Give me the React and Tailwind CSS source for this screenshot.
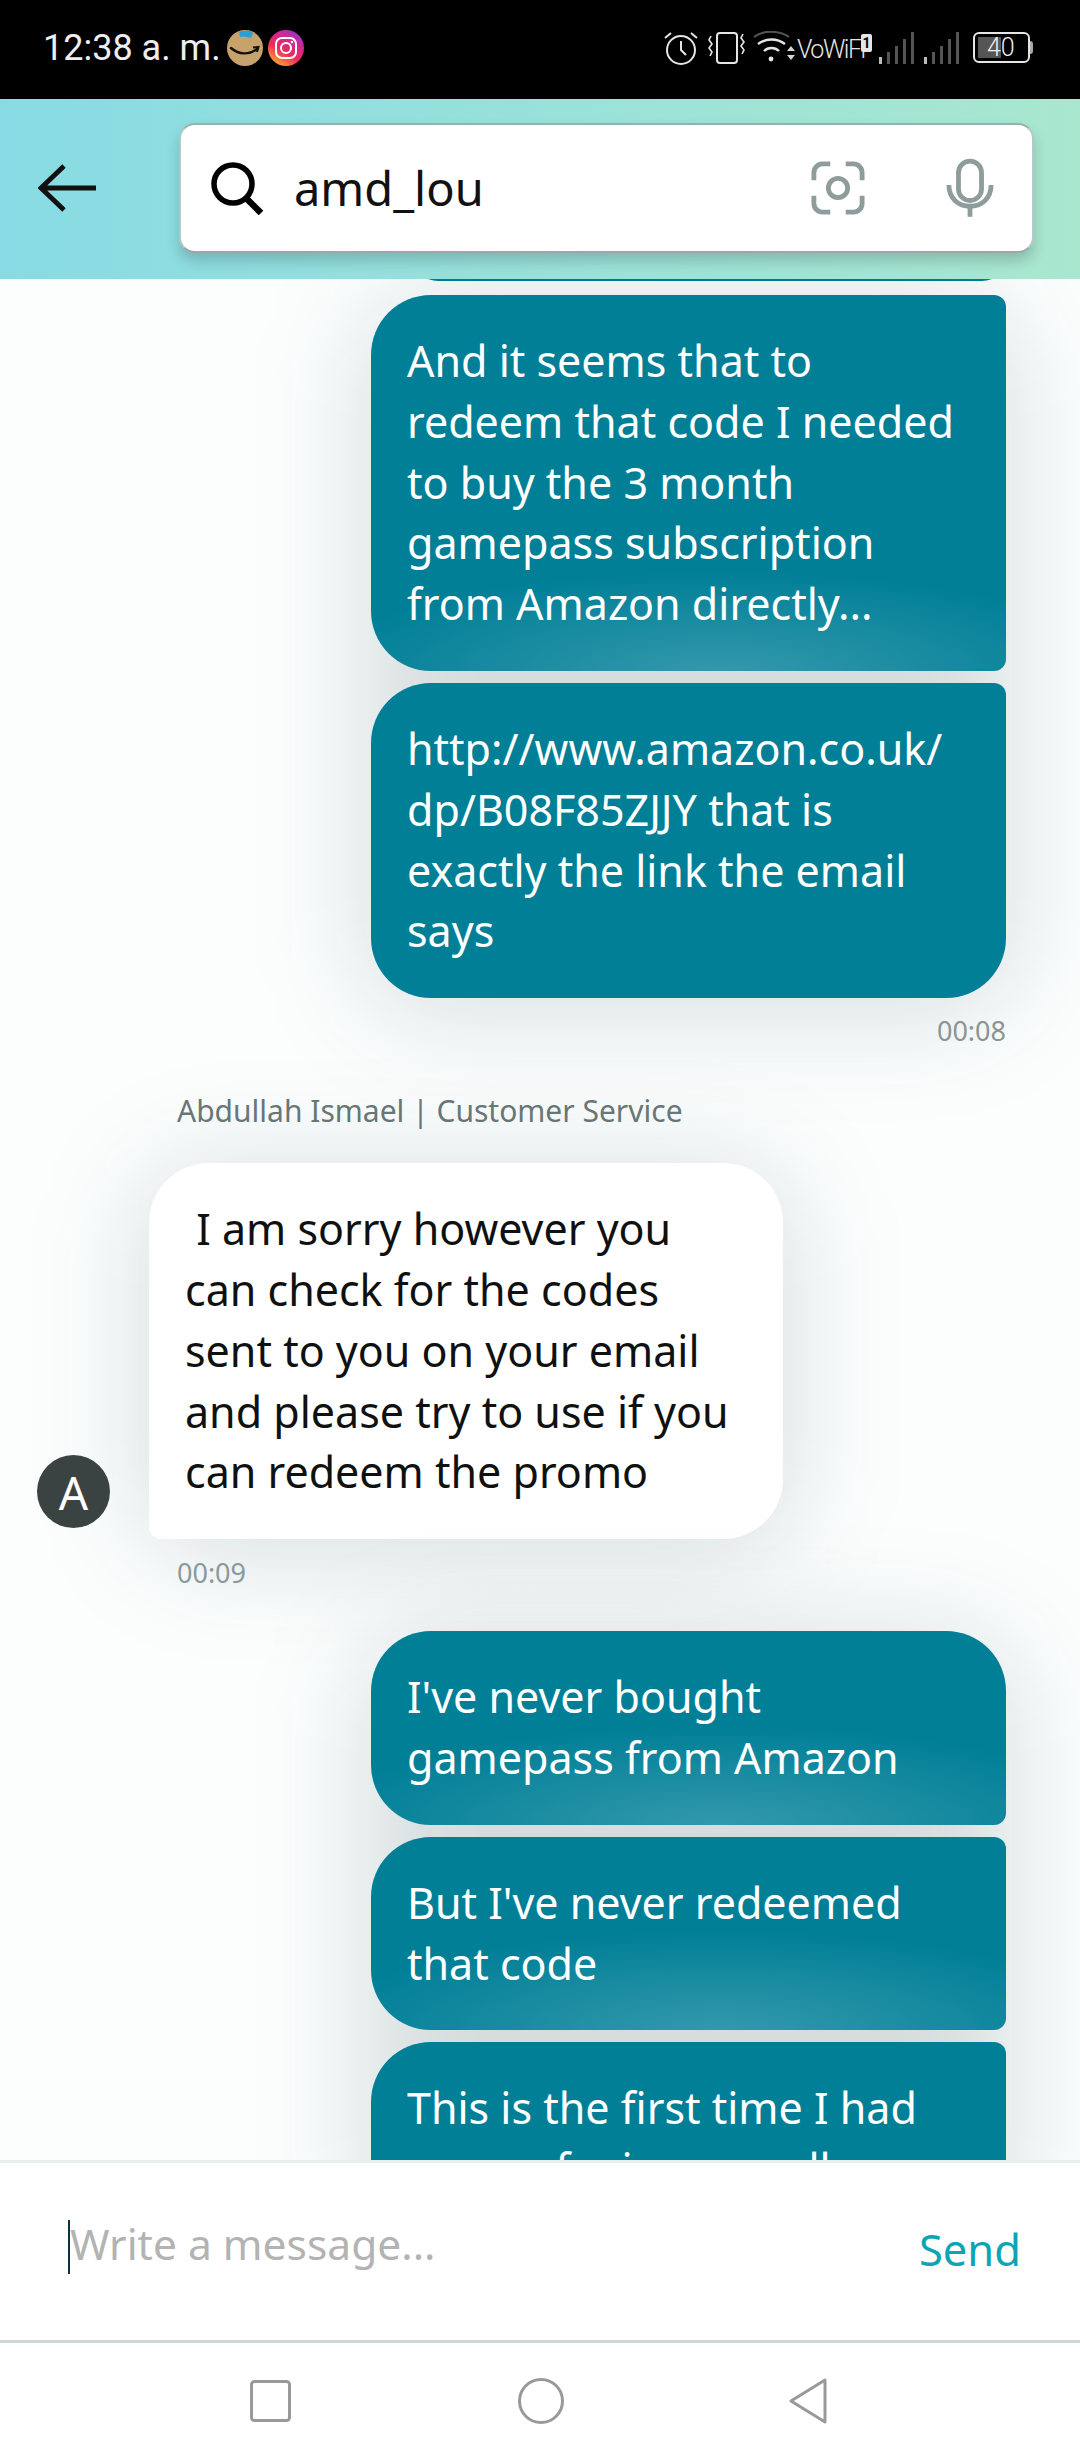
import React from "react";

const FONT = "font-['Noto_Sans',sans-serif]";

const AmazonIcon = () => (
  <svg width="36" height="36" viewBox="0 0 36 36">
    <circle cx="18" cy="18" r="18" fill="#c8a26c" />
    <path d="M12 1.5 L23 0.5 L26 3 L24 8 L17 6.5 L13 7 Z" fill="#2a9fd6" />
    <path d="M4 18 C12 25 22 25 30 19" fill="none" stroke="#111" strokeWidth="2.4" strokeLinecap="round" />
    <path d="M26 17.5 L31.5 17 L30 22" fill="none" stroke="#111" strokeWidth="2" />
  </svg>
);

const InstagramIcon = () => (
  <svg width="36" height="36" viewBox="0 0 36 36">
    <defs>
      <linearGradient id="ig" x1="0.2" y1="1" x2="0.8" y2="0">
        <stop offset="0" stopColor="#fdb32b" />
        <stop offset="0.4" stopColor="#ee2a5b" />
        <stop offset="0.8" stopColor="#c32aa3" />
        <stop offset="1" stopColor="#8a3ac8" />
      </linearGradient>
    </defs>
    <circle cx="18" cy="18" r="18" fill="url(#ig)" />
    <rect x="8" y="8" width="20" height="20" rx="6" fill="none" stroke="#fff" strokeWidth="2" />
    <circle cx="18" cy="18" r="5" fill="none" stroke="#fff" strokeWidth="2" />
    <circle cx="24" cy="12" r="1.3" fill="#fff" />
  </svg>
);

const Signal = ({ className }) => (
  <svg className={className} width="37" height="32" viewBox="0 0 37 32">
    <rect x="1" y="25" width="3" height="7" fill="#bbb" />
    <rect x="9" y="20" width="3" height="12" fill="#555" />
    <rect x="17" y="14" width="3" height="18" fill="#555" />
    <rect x="25" y="7" width="3" height="25" fill="#555" />
    <rect x="33" y="0" width="3" height="32" fill="#555" />
  </svg>
);

const StatusIcons = () => (
  <div className="flex items-center">
    <svg width="36" height="36" viewBox="0 0 36 36" fill="none" stroke="#e5e5e5" strokeWidth="2">
      <circle cx="18" cy="20" r="14" />
      <path d="M18 11v9l5 5M2 8l6-5M34 8l-6-5" />
    </svg>
    <svg className="ml-[9px]" width="38" height="32" viewBox="0 0 38 32" fill="none" stroke="#e5e5e5" strokeWidth="2">
      <rect x="9" y="1" width="20" height="30" rx="3" />
      <path d="M3 4l-2 4 3 4-3 4 3 4-2 4M35 2l-2 4 3 4-3 4 3 4-2 4" strokeWidth="1.6" />
    </svg>
    <svg className="ml-[7px]" width="44" height="34" viewBox="0 0 44 34" fill="none">
      <path d="M1 6C10 -1 26 -1 36 6" stroke="#555" strokeWidth="2" />
      <path d="M5 13C13 7 24 7 32 13M11 20C15 16 22 16 26 20" stroke="#e5e5e5" strokeWidth="2.4" />
      <circle cx="18" cy="28" r="2.4" fill="#e5e5e5" />
      <path d="M34 20l4-5 4 5zM34 24l4 5 4-5z" fill="#d4d4d4" />
    </svg>
    <span className="mt-[4px] w-[64px] whitespace-nowrap text-[25px] leading-none text-[#e5e5e5] font-['Roboto',sans-serif] font-light tracking-[-1.5px]">VoWiFi</span>
    <span className="-mt-[10px] flex h-[18px] w-[11px] items-center justify-center rounded-[2px] bg-[#e5e5e5] text-[14px] font-bold leading-none text-black font-['Roboto',sans-serif]">1</span>
    <Signal className="ml-[6px]" />
    <Signal className="ml-[8px]" />
    <div className="relative ml-[13px] flex h-[31px] w-[57px] items-center rounded-[6px] border-2 border-[#e5e5e5] pl-[3px]">
      <div className="h-[21px] w-[23px] bg-[#555]" />
      <span className="absolute left-[12px] top-[1px] text-[25px] leading-[25px] text-[#eee] font-['Roboto',sans-serif] font-light">40</span>
    </div>
    <div className="h-[13px] w-[3px] rounded-r-sm bg-[#aaa]" />
  </div>
);

// soft grey halo the app paints behind each message group
const Glow = () => <div className="absolute -inset-x-[6px] top-[6px] -bottom-[14px] rounded-[64px] bg-[#00202a]/15 blur-[55px]" />;

const Bubble = ({ lines, first, last, fade }) => (
  <div
    className={`relative w-[635px] overflow-hidden rounded-[60px] bg-[#007f97] px-9 py-9 text-[43px] leading-[60.8px] text-white ${
      first ? "" : "rounded-tr-[12px]"
    } ${last ? "" : "rounded-br-[12px]"}`}
  >
    {fade && <div className="absolute inset-x-0 bottom-0 h-[100px] bg-[radial-gradient(ellipse_65%_100%_at_55%_100%,rgba(255,255,255,0.2),rgba(255,255,255,0))]" />}
    <div className="relative">
      {lines.map((l, i) => (
        <div key={i}>{l}</div>
      ))}
    </div>
  </div>
);

export default function App() {
  return (
    <div className={`flex h-[2460px] w-[1080px] flex-col overflow-hidden bg-white ${FONT}`}>
      <div className="flex h-[99px] shrink-0 items-center justify-between bg-black pl-[43px] pr-[47px] pb-[4px]">
        <div className="flex items-center">
          <span className="text-[36px] leading-none text-[#eee] font-['Roboto',sans-serif]">12:38 a. m.</span>
          <div className="ml-[6px] flex gap-[5px]">
            <AmazonIcon />
            <InstagramIcon />
          </div>
        </div>
        <StatusIcons />
      </div>

      <div className="relative z-10 flex h-[180px] shrink-0 items-center bg-gradient-to-r from-[#88dbe4] to-[#a9e7cf] pb-[2px] pl-[38px]">
        <svg width="58" height="48" viewBox="0 0 58 48" fill="none" stroke="#111" strokeWidth="5">
          <path d="M58 24H4M26 2L3 24l23 22" />
        </svg>
        <div className="ml-[83px] flex h-[130px] w-[855px] items-center rounded-[16px] border-2 border-x-[#b5c8c8] border-t-[#9ab0b0] border-b-[#9aa8a8] bg-white pl-[29px] pr-[38px] shadow-[0_8px_14px_rgba(0,0,0,0.18)]">
          <svg width="54" height="54" viewBox="0 0 54 54" fill="none" stroke="#000" strokeWidth="5.5">
            <circle cx="23" cy="23" r="19" />
            <path d="M36 37l15 15" strokeWidth="6.5" />
          </svg>
          <span className="ml-[30px] flex-1 text-[47px] leading-none text-[#111]">amd_lou</span>
          <svg width="54" height="54" viewBox="0 0 56 56" fill="none" stroke="#8f9c9c" strokeWidth="5">
            <path d="M3 20V12a9 9 0 0 1 9-9h8M36 3h8a9 9 0 0 1 9 9v8M53 36v8a9 9 0 0 1-9 9h-8M20 53h-8a9 9 0 0 1-9-9v-8" />
            <circle cx="28" cy="28" r="10" />
          </svg>
          <svg className="ml-[81px]" width="48" height="60" viewBox="0 0 50 60" fill="none">
            <rect x="13" y="2" width="24" height="41" rx="12" stroke="#8f9c9c" strokeWidth="5" />
            <path d="M3 27c0 14 10 22 22 22s22-8 22-22" stroke="#8f9c9c" strokeWidth="5" />
            <path d="M25 48v12" stroke="#8f9c9c" strokeWidth="5" />
          </svg>
        </div>
      </div>

      <div className="min-h-0 flex-1 overflow-hidden bg-[#fcfefe]">
        <div className="-mt-[58px] ml-[414px] h-[60px] w-[592px] rounded-b-[24px] bg-[#007f97]" />

        <div className="relative mt-[14px] ml-[371px] flex w-[635px] flex-col gap-[12px]">
          <Glow />
          <Bubble fade lines={["And it seems that to", "redeem that code I needed", "to buy the 3 month", "gamepass subscription", "from Amazon directly..."]} />
          <Bubble last lines={["http://www.amazon.co.uk/", "dp/B08F85ZJJY that is", "exactly the link the email", "says"]} />
        </div>
        <div className="relative mt-[18px] pr-[74px] text-right text-[27px] leading-[30px] text-[#8a9494]">00:08</div>

        <div className="relative ml-[177px] mt-[47px] text-[30px] leading-[36px] text-[#6b7878]">Abdullah Ismael | Customer Service</div>

        <div className="mt-[34px] flex items-end gap-[39px] pl-[37px]">
          <div className="relative z-[1] mb-[11px] flex h-[73px] w-[73px] items-center justify-center rounded-full bg-[#3b4242] text-[46px] leading-none text-white">A</div>
          <div className="relative w-[634px]">
            <Glow />
            <div className="relative rounded-[60px] rounded-bl-[12px] bg-white px-9 py-9 text-[43px] leading-[60.8px] text-[#0f1111]">
              {["\u00a0I am sorry however you", "can check for the codes", "sent to you on your email", "and please try to use if you", "can redeem the promo"].map((l, i) => (
                <div key={i}>{l}</div>
              ))}
            </div>
          </div>
        </div>
        <div className="relative ml-[177px] mt-[19px] text-[27px] leading-[30px] text-[#8a9a9a]">00:09</div>

        <div className="relative mt-[43px] ml-[371px] flex w-[635px] flex-col gap-[12px]">
          <Glow />
          <Bubble first fade lines={["I've never bought", "gamepass from Amazon"]} />
          <Bubble fade lines={["But I've never redeemed", "that code"]} />
          <Bubble lines={["This is the first time I had", "some of mine as well"]} />
        </div>
      </div>

      <div className="relative z-10 flex h-[183px] shrink-0 items-center justify-between border-y-[3px] border-t-[#e9eeee] border-b-[#cfd6d8] bg-white pb-[10px] pl-[68px] pr-[59px]">
        <div className="flex items-center">
          <div className="h-[54px] w-[2px] bg-[#07343f]" />
          <span className="-mt-[4px] text-[42.5px] leading-none text-[#b3b3b3]">Write a message...</span>
        </div>
        <span className="mt-[6px] text-[43.5px] leading-none text-[#0ca5b5]">Send</span>
      </div>

      <div className="flex h-[117px] shrink-0 items-center bg-white pb-[1px]">
        <svg className="ml-[250px]" width="41" height="42" viewBox="0 0 41 42" fill="none" stroke="#999" strokeWidth="3">
          <rect x="1.5" y="1.5" width="38" height="39" rx="3" />
        </svg>
        <svg className="ml-[227px]" width="46" height="46" viewBox="0 0 46 46" fill="none" stroke="#999" strokeWidth="3">
          <circle cx="23" cy="23" r="21.5" />
        </svg>
        <svg className="ml-[225px]" width="38" height="46" viewBox="0 0 38 46" fill="none" stroke="#999" strokeWidth="3" strokeLinejoin="round">
          <path d="M36 2v42L2 23z" />
        </svg>
      </div>
    </div>
  );
}
